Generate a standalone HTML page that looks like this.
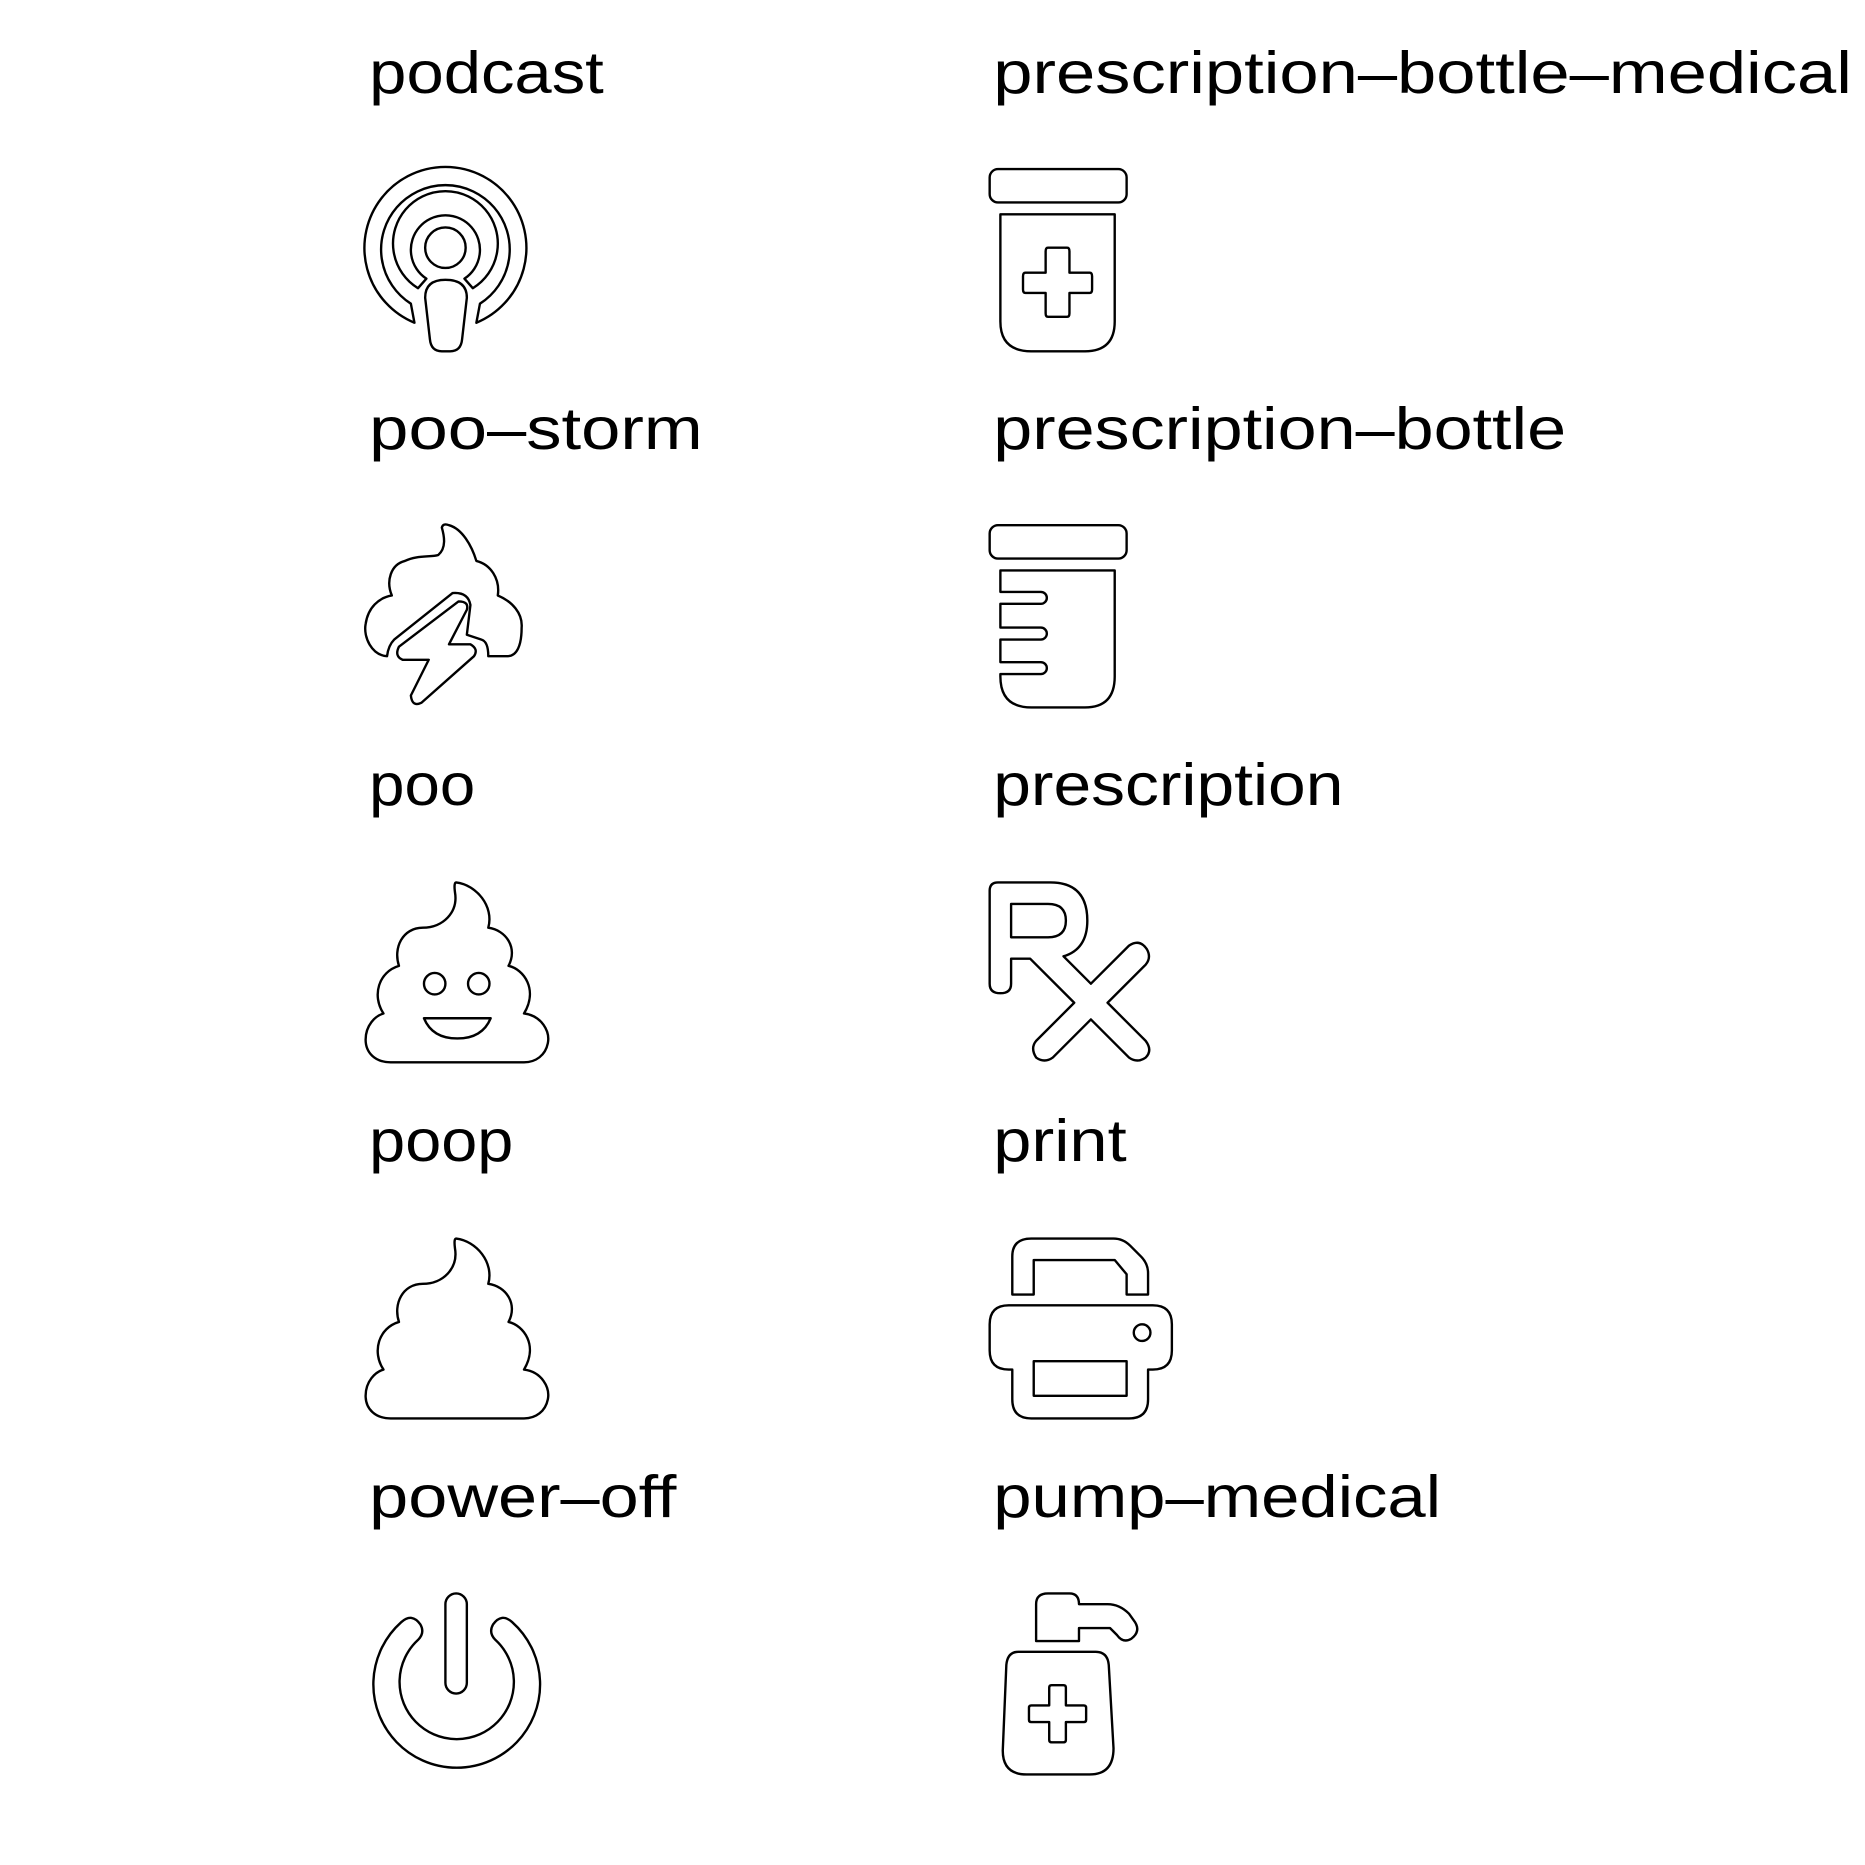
<!DOCTYPE html>
<html><head><meta charset="utf-8"><style>
html,body{margin:0;padding:0;background:#fff;}
svg{display:block}
text{font-family:"Liberation Sans",sans-serif;font-size:50px;fill:#000;}
</style></head><body>
<svg width="1865" height="1865" viewBox="0 0 1566 1566" xmlns="http://www.w3.org/2000/svg">
<g>
<text x="310" y="78" textLength="197" lengthAdjust="spacingAndGlyphs">podcast</text>
<text x="834" y="78" textLength="721" lengthAdjust="spacingAndGlyphs">prescription–bottle–medical</text>
<text x="310" y="377" textLength="280" lengthAdjust="spacingAndGlyphs">poo–storm</text>
<text x="834" y="377" textLength="481" lengthAdjust="spacingAndGlyphs">prescription–bottle</text>
<text x="310" y="676" textLength="89" lengthAdjust="spacingAndGlyphs">poo</text>
<text x="834" y="676" textLength="294" lengthAdjust="spacingAndGlyphs">prescription</text>
<text x="310" y="975" textLength="121" lengthAdjust="spacingAndGlyphs">poop</text>
<text x="834" y="975" textLength="112" lengthAdjust="spacingAndGlyphs">print</text>
<text x="310" y="1274" textLength="258" lengthAdjust="spacingAndGlyphs">power–off</text>
<text x="834" y="1274" textLength="376" lengthAdjust="spacingAndGlyphs">pump–medical</text>
</g>
<g fill="none" stroke="#000" stroke-width="2" stroke-linejoin="round">
<path d="M348,271 A68,68 0 1,1 400,271 L403,255 A54,54 0 1,0 345,255 Z"/>
<path d="M351,242 A44,44 0 1,1 397,242 L390,234 A29,29 0 1,0 358,234 Z"/>
<circle cx="374" cy="208" r="17"/>
<path d="M357,250 Q357,235 374,235 Q392,235 392,250 L388,285 Q387,295 378,295 L371,295 Q362,295 361,285 Z"/>
<rect x="831" y="142" width="115" height="28" rx="7"/>
<path d="M840,180 H936 V270 Q936,295 911,295 H866 Q840,295 840,270 Z"/>
<path d="M880,208 H896 Q898,208 898,211 V229 H915 Q917,229 917,232 V243 Q917,246 915,246 H898 V263 Q898,266 896,266 H880 Q878,266 878,263 V246 H861 Q859,246 859,243 V232 Q859,229 861,229 H878 V211 Q878,208 880,208 Z"/>
<rect x="831" y="441" width="115" height="28" rx="7"/>
<path d="M840,479 H936 V568 Q936,594 911,594 H866 Q840,594 840,568 V566 H874 A5,5 0 0 0 874,556 H840 V537 H874 A5,5 0 0 0 874,527 H840 V507 H874 A5,5 0 0 0 874,497 H840 Z"/>
<path d="M325,551 C312,550 305,535 307,524 C309,510 318,502 329,500 C324,488 328,474 340,471 C350,466 362,468 368,466 C375,460 373,450 371,443 Q372,439 377,441 C388,444 396,458 400,471 C412,474 420,486 418,500 C430,505 439,515 438,527 C438,542 434,551 426,551 H410 C410,543 408,538 404,537 L392,533 L395,508 Q393,497 380,498 L331,537 Q326,542 325,551 Z"/>
<path d="M385,505 Q394,505 392,512 L377,541 H395 Q402,545 398,551 L354,590 Q346,594 345,584 L360,554 H338 Q331,551 335,543 Z"/>
<g transform="translate(0,-299)">
<path d="M383,1040 C400,1042 415,1060 410,1078 C425,1080 435,1095 427,1110 C440,1113 452,1130 440,1150 C455,1152 462,1165 460,1175 C458,1185 450,1191 440,1191 H328 C315,1191 307,1183 307,1172 C307,1160 315,1152 322,1150 C312,1135 318,1115 335,1110 C330,1095 338,1078 355,1078 C372,1078 385,1065 382,1048 Q381,1040 383,1040 Z"/>
</g>
<circle cx="365" cy="826" r="9"/>
<circle cx="402" cy="826" r="9"/>
<path d="M356,855 H412 Q405,872 384,872 Q363,872 356,855 Z"/>
<path d="M383,1040 C400,1042 415,1060 410,1078 C425,1080 435,1095 427,1110 C440,1113 452,1130 440,1150 C455,1152 462,1165 460,1175 C458,1185 450,1191 440,1191 H328 C315,1191 307,1183 307,1172 C307,1160 315,1152 322,1150 C312,1135 318,1115 335,1110 C330,1095 338,1078 355,1078 C372,1078 385,1065 382,1048 Q381,1040 383,1040 Z"/>
<path d="M838,741 H882 Q913,741 913,773 Q913,797 893,803 L916,826 L948,794 Q957,788 963,797 Q967,804 962,810 L930,842 L962,874 Q968,882 962,888 Q955,893 948,888 L916,856 L884,888 Q877,893 870,888 Q865,880 870,874 L902,842 L865,805 H849 V826 Q849,834 840,834 Q831,834 831,826 V748 Q831,741 838,741 Z"/>
<path d="M849,759 H880 Q895,759 895,773 Q895,787 880,787 H849 Z"/>
<path d="M850,1087 V1055 Q850,1040 866,1040 H935 Q943,1040 949,1046 L958,1055 Q964,1061 964,1069 V1087 H946 V1070 L936,1058 H868 V1087 Z"/>
<path d="M847,1096 H968 Q984,1096 984,1112 V1134 Q984,1150 968,1150 H964 V1175 Q964,1191 948,1191 H866 Q850,1191 850,1175 V1150 H847 Q831,1150 831,1134 V1112 Q831,1096 847,1096 Z"/>
<rect x="868" y="1143" width="78" height="29"/>
<circle cx="959" cy="1119" r="7"/>
<rect x="374" y="1338" width="18" height="84" rx="9"/>
<path d="M337,1362 Q346,1354 353,1364 Q357,1371 351,1377 A48,48 0 1,0 416,1377 Q410,1371 414,1364 Q421,1354 430,1362 A70,70 0 1,1 337,1362 Z"/>
<path d="M870,1347 Q870,1338 880,1338 H898 Q906,1338 906,1347 H930 Q940,1347 948,1355 L953,1362 Q958,1370 950,1376 Q943,1380 938,1373 L932,1367 H906 V1378 H870 Z"/>
<path d="M855,1387 H920 Q930,1387 931,1398 L935,1468 Q935,1490 915,1490 H862 Q842,1490 842,1470 L845,1398 Q846,1387 855,1387 Z"/>
<path d="M883,1415 H893 Q895,1415 895,1417 V1432 H910 Q912,1432 912,1434 V1444 Q912,1446 910,1446 H895 V1461 Q895,1463 893,1463 H883 Q881,1463 881,1461 V1446 H866 Q864,1446 864,1444 V1434 Q864,1432 866,1432 H881 V1417 Q881,1415 883,1415 Z"/>
</g>
</svg>
</body></html>
